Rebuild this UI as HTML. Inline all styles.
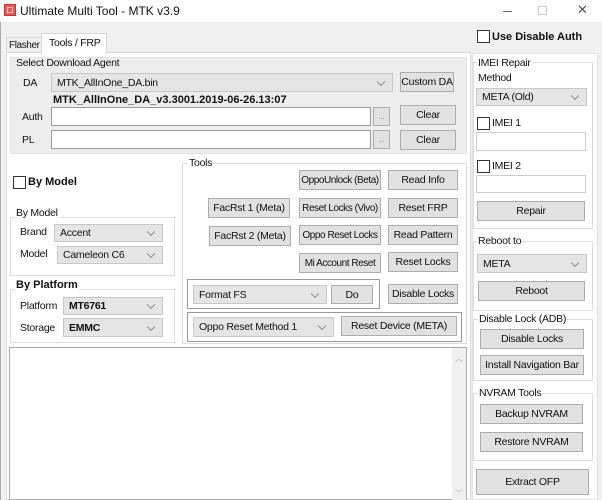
<!DOCTYPE html>
<html><head><meta charset="utf-8"><style>
*{box-sizing:border-box;margin:0;padding:0}
body{width:602px;height:500px;overflow:hidden;background:#f0f0f0;font-family:"Liberation Sans",sans-serif;font-size:10.5px;letter-spacing:-0.25px;color:#111;position:relative}
.a{position:absolute}
.t{position:absolute;white-space:nowrap;line-height:12px}
.btn{position:absolute;background:#e1e1e1;border:1px solid #adadad;text-align:center;white-space:nowrap;display:flex;align-items:center;justify-content:center;font-size:10.5px;overflow:hidden}
.n{font-size:10px;letter-spacing:-0.45px}
.cb{position:absolute;background:#e5e5e5;border:1px solid #c8c8c8;padding-left:5px;display:flex;align-items:center;white-space:nowrap}
.cb::after{content:"";position:absolute;right:8px;top:50%;width:5px;height:5px;border-right:1px solid #888;border-bottom:1px solid #888;transform:translateY(-70%) rotate(45deg)}
.tb{position:absolute;background:#fff;border:1px solid #9a9a9a}
.grp{position:absolute;border:1px solid #dcdcdc}
.lbl{position:absolute;background:inherit;padding:0 1px;line-height:12px;white-space:nowrap}
.chk{position:absolute;width:13px;height:13px;border:1px solid #333;background:#fff}
</style></head><body>
<div class="a" style="left:0;top:0;width:602px;height:22px;background:#fff"></div>
<div class="a" style="left:4px;top:4px;width:12px;height:12px;background:#e35a5a;border:1px solid #c33"></div>
<div class="a" style="left:7px;top:7px;width:6px;height:6px;border:1px solid #fbb"></div>
<div class="t" style="left:20px;top:5px;font-size:12px;letter-spacing:0">Ultimate Multi Tool - MTK v3.9</div>
<div class="a" style="left:503px;top:11px;width:9px;height:1px;background:#666"></div>
<div class="a" style="left:538px;top:6px;width:9px;height:9px;border:1px solid #ccc"></div>
<div class="t" style="left:577px;top:4px;font-size:13px;color:#555">✕</div>
<div class="a" style="left:0;top:22px;width:1px;height:478px;background:#aaa"></div>

<div class="chk" style="left:477px;top:30px"></div>
<div class="t" style="left:492px;top:31px;font-weight:bold;font-size:11px;letter-spacing:0">Use Disable Auth</div>

<!-- tabs -->
<div class="a" style="left:6px;top:37px;width:36px;height:16px;border:1px solid #d9d9d9;border-bottom:none"></div>
<div class="t" style="left:9px;top:40px;font-size:10px;letter-spacing:-0.4px">Flasher</div>
<div class="a" style="left:41px;top:33px;width:66px;height:21px;background:#fff;border:1px solid #d9d9d9;border-bottom:none;z-index:2"></div>
<div class="t" style="left:49px;top:37px;z-index:3">Tools / FRP</div>
<div class="a" style="left:6px;top:52px;width:465px;height:448px;background:#fff;border:1px solid #d9d9d9"></div>

<!-- DA group -->
<div class="a" style="left:10px;top:57px;width:457px;height:97px;background:#ededed;border:1px solid #e3e3e3"></div>
<div class="t" style="left:16px;top:57px">Select Download Agent</div>
<div class="t" style="left:23px;top:77px">DA</div>
<div class="cb" style="left:51px;top:73px;width:342px;height:19px">MTK_AllInOne_DA.bin</div>
<div class="btn" style="left:400px;top:72px;width:54px;height:20px">Custom DA</div>
<div class="t" style="left:53px;top:94px;font-weight:bold;font-size:11px;letter-spacing:0">MTK_AllInOne_DA_v3.3001.2019-06-26.13:07</div>
<div class="t" style="left:22px;top:111px">Auth</div>
<div class="tb" style="left:51px;top:107px;width:320px;height:19px"></div>
<div class="btn" style="left:373px;top:107px;width:17px;height:19px;font-size:8px;color:#888">...</div>
<div class="btn" style="left:400px;top:105px;width:56px;height:20px">Clear</div>
<div class="t" style="left:22px;top:134px">PL</div>
<div class="tb" style="left:51px;top:130px;width:320px;height:19px"></div>
<div class="btn" style="left:373px;top:130px;width:17px;height:19px;font-size:8px;color:#888">...</div>
<div class="btn" style="left:400px;top:130px;width:56px;height:20px">Clear</div>

<!-- by model -->
<div class="chk" style="left:13px;top:176px"></div>
<div class="t" style="left:28px;top:176px;font-weight:bold;font-size:11px;letter-spacing:0">By Model</div>
<div class="grp" style="left:10px;top:217px;width:165px;height:59px"></div>
<div class="lbl" style="left:15px;top:207px;background:#fff">By Model</div>
<div class="t" style="left:20px;top:226px">Brand</div>
<div class="cb" style="left:54px;top:224px;width:109px;height:18px">Accent</div>
<div class="t" style="left:20px;top:248px">Model</div>
<div class="cb" style="left:57px;top:246px;width:106px;height:18px">Cameleon C6</div>
<div class="grp" style="left:10px;top:289px;width:165px;height:54px"></div>
<div class="lbl" style="left:15px;top:279px;background:#fff;font-weight:bold;font-size:11px;letter-spacing:0">By Platform</div>
<div class="t" style="left:20px;top:300px">Platform</div>
<div class="cb" style="left:63px;top:297px;width:100px;height:18px;font-weight:bold">MT6761</div>
<div class="t" style="left:20px;top:322px">Storage</div>
<div class="cb" style="left:63px;top:318px;width:100px;height:19px;font-weight:bold">EMMC</div>

<!-- tools -->
<div class="grp" style="left:182px;top:163px;width:285px;height:181px"></div>
<div class="lbl" style="left:188px;top:157px;background:#fff">Tools</div>
<div class="btn n" style="left:299px;top:170px;width:82px;height:20px">OppoUnlock (Beta)</div>
<div class="btn" style="left:388px;top:170px;width:70px;height:20px">Read Info</div>
<div class="btn" style="left:208px;top:198px;width:82px;height:20px">FacRst 1 (Meta)</div>
<div class="btn n" style="left:299px;top:198px;width:82px;height:20px">Reset Locks (Vivo)</div>
<div class="btn" style="left:388px;top:198px;width:70px;height:20px">Reset FRP</div>
<div class="btn" style="left:209px;top:226px;width:82px;height:20px">FacRst 2 (Meta)</div>
<div class="btn n" style="left:299px;top:225px;width:82px;height:20px">Oppo Reset Locks</div>
<div class="btn" style="left:388px;top:225px;width:70px;height:20px">Read Pattern</div>
<div class="btn n" style="left:299px;top:253px;width:82px;height:20px">Mi Account Reset</div>
<div class="btn" style="left:388px;top:252px;width:70px;height:20px">Reset Locks</div>
<div class="a" style="left:187px;top:279px;width:193px;height:30px;border:1px solid #999"></div>
<div class="cb" style="left:193px;top:285px;width:134px;height:19px">Format FS</div>
<div class="btn" style="left:331px;top:285px;width:42px;height:19px">Do</div>
<div class="btn" style="left:388px;top:284px;width:70px;height:20px">Disable Locks</div>
<div class="a" style="left:187px;top:312px;width:275px;height:30px;border:1px solid #999"></div>
<div class="cb" style="left:193px;top:317px;width:141px;height:20px">Oppo Reset Method 1</div>
<div class="btn" style="left:341px;top:316px;width:116px;height:20px">Reset Device (META)</div>

<!-- log -->
<div class="a" style="left:9px;top:347px;width:458px;height:153px;background:#fff;border:1px solid #aaa"></div>
<div class="a" style="left:452px;top:348px;width:14px;height:152px;background:#f0f0f0"></div>
<div class="t" style="left:455px;top:353px;font-size:8px;color:#aaa">︿</div>
<div class="t" style="left:455px;top:488px;font-size:8px;color:#aaa">﹀</div>

<!-- right panel -->
<div class="a" style="left:472px;top:53px;width:126px;height:447px;background:#fff;border:1px solid #e3e3e3"></div>
<div class="grp" style="left:473px;top:62px;width:120px;height:167px"></div>
<div class="lbl" style="left:477px;top:57px;background:#fff">IMEI Repair</div>
<div class="t" style="left:478px;top:72px">Method</div>
<div class="cb" style="left:476px;top:88px;width:111px;height:18px">META (Old)</div>
<div class="chk" style="left:477px;top:117px"></div>
<div class="t" style="left:492px;top:117px">IMEI 1</div>
<div class="tb" style="left:476px;top:132px;width:110px;height:19px;border-color:#ccc"></div>
<div class="chk" style="left:477px;top:160px"></div>
<div class="t" style="left:492px;top:160px">IMEI 2</div>
<div class="tb" style="left:476px;top:175px;width:110px;height:18px;border-color:#ccc"></div>
<div class="btn" style="left:477px;top:201px;width:108px;height:20px">Repair</div>
<div class="grp" style="left:473px;top:241px;width:120px;height:70px"></div>
<div class="lbl" style="left:477px;top:235px;background:#fff">Reboot to</div>
<div class="cb" style="left:477px;top:254px;width:110px;height:19px">META</div>
<div class="btn" style="left:478px;top:281px;width:107px;height:20px">Reboot</div>
<div class="grp" style="left:473px;top:319px;width:120px;height:62px"></div>
<div class="lbl" style="left:478px;top:313px;background:#fff">Disable Lock (ADB)</div>
<div class="btn" style="left:480px;top:329px;width:104px;height:20px">Disable Locks</div>
<div class="btn" style="left:480px;top:355px;width:104px;height:20px">Install Navigation Bar</div>
<div class="grp" style="left:473px;top:393px;width:120px;height:68px"></div>
<div class="lbl" style="left:478px;top:387px;background:#fff">NVRAM Tools</div>
<div class="btn" style="left:480px;top:404px;width:103px;height:20px">Backup NVRAM</div>
<div class="btn" style="left:480px;top:432px;width:103px;height:20px">Restore NVRAM</div>
<div class="btn" style="left:476px;top:469px;width:113px;height:26px">Extract OFP</div>
</body></html>
